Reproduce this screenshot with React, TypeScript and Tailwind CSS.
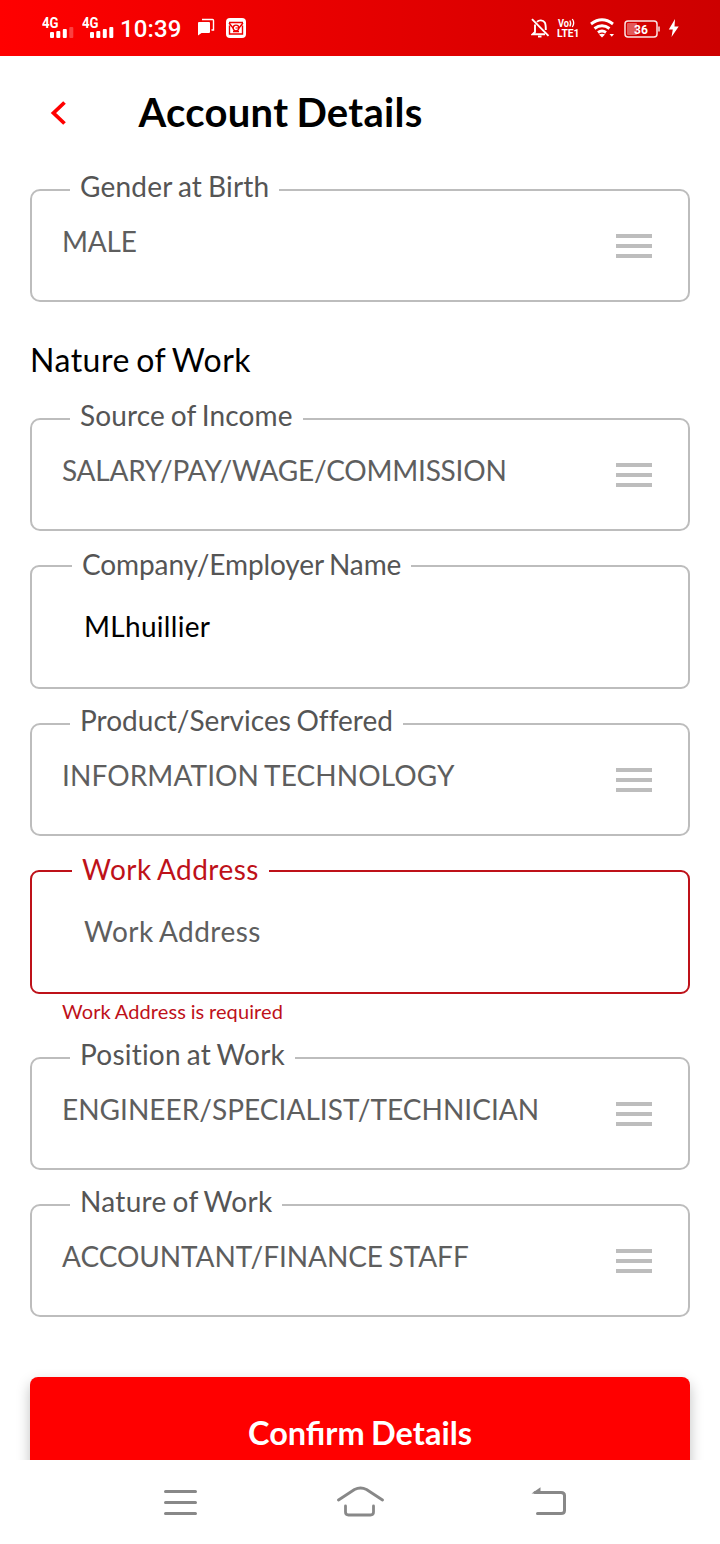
import React from "react";

function MenuBars() {
  return (
    <div className="flex w-9 flex-col gap-1.5">
      <div className="h-1 bg-[#bdbdbd]" />
      <div className="h-1 bg-[#bdbdbd]" />
      <div className="h-1 bg-[#bdbdbd]" />
    </div>
  );
}

type SelectProps = { label: string; value: string; labelClass: string; valueClass: string };

function SelectField({ label, value, labelClass, valueClass }: SelectProps) {
  return (
    <div className="relative flex h-[113px] shrink-0 items-start justify-between rounded-[10px] border-2 border-[#bdbdbd] pl-[30px] pr-9">
      <span className={`absolute left-[38px] top-[-23px] h-9 whitespace-nowrap bg-white px-2.5 text-[28px] leading-9 text-[#555] [word-spacing:-1.5px] ${labelClass}`}>{label}</span>
      <span className={`mt-8 whitespace-nowrap text-[28px] leading-9 text-[#5e5e5e] [word-spacing:-1.5px] ${valueClass}`}>{value}</span>
      <div className="mt-[43px]"><MenuBars /></div>
    </div>
  );
}

type InputProps = { label: string; value?: string; placeholder?: string; error?: string; labelClass: string; valueClass: string };

function InputField({ label, value, placeholder, error, labelClass, valueClass }: InputProps) {
  return (
    <div>
      <div className={`relative h-[124px] rounded-[9px] border-2 pl-[52px] ${error ? "border-[#be1119]" : "border-[#bdbdbd]"}`}>
        <span className={`absolute left-10 top-[-21px] h-9 whitespace-nowrap bg-white px-2.5 text-[28px] leading-9 [word-spacing:-1.5px] ${labelClass} ${error ? "text-[#be1119]" : "text-[#555]"}`}>{label}</span>
        <div className={`pt-[41px] text-[28px] leading-9 [word-spacing:-1.5px] ${valueClass} ${value ? "text-black" : "text-[#5e5e5e]"}`}>{value ?? placeholder}</div>
      </div>
      {error && <div className="pl-8 pt-[5px] text-[20px] leading-6 tracking-[0.11px] text-[#be1119] [word-spacing:-0.6px]">{error}</div>}
    </div>
  );
}

function Signal({ weak }: { weak?: boolean }) {
  return (
    <svg width="34" height="24" viewBox="0 0 34 24" fill="#fff">
      <text x="0" y="12" fontFamily="Roboto, sans-serif" fontWeight="700" fontSize="14" textLength="16.5" lengthAdjust="spacingAndGlyphs">4G</text>
      <rect x="8" y="16" width="4" height="6" rx="1" />
      <rect x="14.300" y="15" width="4" height="7" rx="1" />
      <rect x="20.800" y="13" width="4" height="9" rx="1" />
      <rect x="27.300" y="11" width="4" height="11" rx="1" opacity={weak ? 0.25 : 1} />
    </svg>
  );
}

function StatusBar() {
  return (
    <header className="flex h-14 shrink-0 items-start bg-linear-to-r from-[#ff0000] to-[#cd0000] pl-[42px] text-white">
      <div className="mt-4 flex">
        <div className="w-10"><Signal weak /></div>
        <div className="w-[38px]"><Signal /></div>
      </div>
      <div className="mt-[13px] w-[78px] whitespace-nowrap font-[Roboto] text-[24px] font-medium leading-8 tracking-[0.15px]">10:39</div>
      <svg className="mt-[18px]" width="18" height="20" viewBox="0 0 18 20">
        <path d="M0 5q0-1 1-1h10q1 0 1 1v9q0 1-1 1H3.500L0 17.500z" fill="#fff" />
        <path d="M4 1.500H14.500q1 0 1 1v9.500h-2" fill="none" stroke="#fff" strokeWidth="1.400" />
      </svg>
      <svg className="ml-2.5 mt-[18px]" width="20" height="20" viewBox="0 0 20 20" fill="none">
        <rect width="20" height="20" rx="4" fill="#fff" />
        <path d="M3 4.500H17M3.500 7.500v8.500h13V7.500M3 5l4.500 5.500M17 5l-4.500 5.500M7 13.500h6" stroke="#e00" strokeWidth="1.400" />
        <circle cx="10" cy="10" r="2.800" stroke="#e00" strokeWidth="1.300" />
        <path d="M9.500 10h2.500" stroke="#e00" />
      </svg>
      <svg className="ml-[285px] mt-[18px]" width="20" height="20" viewBox="0 0 20 20" fill="none" stroke="#fff" strokeWidth="1.900">
        <path d="M6 3.800C8 1.800 12 1.800 13.800 4.500c1 1.500 1 4 1 7.500M4 6.500V14l-2.500 2.300H14" />
        <path d="M1 1.200 17.500 17.800" />
        <path d="M7 18.500h3.500" />
      </svg>
      <svg className="ml-[6px] mt-[18px]" width="24" height="21" viewBox="0 0 24 21" fill="#fff" fontFamily="Roboto, sans-serif" fontWeight="700">
        <text x="1" y="9" fontSize="10" textLength="11" lengthAdjust="spacingAndGlyphs">Vo</text>
        <path d="M12.800 2.500q1.800 3 0 6M15.300 1q2.800 4 0 8" fill="none" stroke="#fff" strokeWidth="1.300" />
        <text x="0" y="19" fontSize="10.500" textLength="22.500" lengthAdjust="spacingAndGlyphs">LTE1</text>
      </svg>
      <svg className="ml-[9px] mt-[18px]" width="25" height="20" viewBox="0 0 25 20" fill="none" stroke="#fff" strokeWidth="2.900">
        <path d="M1 6Q12 -2.300 23 6M4.500 10.500Q12 4.900 19.500 10.500M8 14.500Q12 11.500 16 14.500" />
        <path d="M9 16.500q3-1.500 6 0l-3 3z" fill="#fff" stroke="none" />
        <path d="M19.500 16h4.500l-2.200 2.800z" fill="#fff" stroke="none" />
      </svg>
      <svg className="ml-[9px] mt-5" width="36" height="18" viewBox="0 0 36 18">
        <rect x="1" y="1" width="32" height="16" rx="3" fill="none" stroke="#fff" strokeWidth="1.500" opacity=".9" />
        <rect x="3" y="3" width="10" height="12" rx="1" fill="#fff" opacity=".35" />
        <path d="M35 6.500v5" stroke="#fff" strokeWidth="1.300" />
        <text x="17" y="14" textAnchor="middle" fontFamily="Roboto, sans-serif" fontSize="12" fontWeight="700" fill="#fff">36</text>
      </svg>
      <svg className="ml-2 mt-[19px]" width="12" height="19" viewBox="0 0 12 19"><path d="M7 0 .8 10.500h4L3.500 18 10.700 7.500H6.500z" fill="#fff" /></svg>
    </header>
  );
}

export default function App() {
  return (
    <div className="flex h-[1544px] w-[720px] flex-col overflow-hidden bg-white font-[Lato,sans-serif]">
      <StatusBar />
      <main className="flex h-[1404px] shrink-0 flex-col overflow-hidden px-[30px]">
        <div className="flex h-[133px] shrink-0 items-start">
          <svg className="ml-5 mt-[45px]" width="18" height="25" viewBox="0 0 18 25"><path d="M14.500 1.500 3.500 12 14.500 22.500" fill="none" stroke="#f00" strokeWidth="3.800" /></svg>
          <h1 className="ml-[70.500px] mt-8 whitespace-nowrap text-[40px] font-bold leading-[48px] tracking-[0.3px] [word-spacing:-2px]">Account Details</h1>
        </div>
        <SelectField label="Gender at Birth" value="MALE" labelClass="tracking-[0.21px]" valueClass="tracking-[-0.2px]" />
        <h2 className="my-[38px] text-[32px] leading-10 tracking-[0.49px] [word-spacing:-2.2px]">Nature of Work</h2>
        <div className="flex shrink-0 flex-col gap-[34px]">
          <SelectField label="Source of Income" value="SALARY/PAY/WAGE/COMMISSION" labelClass="tracking-[0.14px]" valueClass="tracking-[-0.22px]" />
          <InputField label="Company/Employer Name" value="MLhuillier" labelClass="tracking-[-0.11px]" valueClass="tracking-[0.3px]" />
          <SelectField label="Product/Services Offered" value="INFORMATION TECHNOLOGY" labelClass="tracking-[0.01px]" valueClass="tracking-[0.1px]" />
          <InputField label="Work Address" placeholder="Work Address" error="Work Address is required" labelClass="tracking-[0.49px]" valueClass="tracking-[0.49px]" />
          <SelectField label="Position at Work" value="ENGINEER/SPECIALIST/TECHNICIAN" labelClass="tracking-[0.22px]" valueClass="tracking-[0.03px]" />
          <SelectField label="Nature of Work" value="ACCOUNTANT/FINANCE STAFF" labelClass="tracking-[0.3px]" valueClass="tracking-[-0.06px]" />
        </div>
        <button className="mt-[60px] h-[112px] shrink-0 rounded-lg bg-[#ff0000] text-[32.5px] font-bold text-white shadow-[0_6px_14px_rgba(0,0,0,0.25)] [word-spacing:-1.5px]">Confirm Details</button>
      </main>
      <nav className="flex h-[84px] shrink-0 items-start bg-white pl-[164px] pt-6">
        <svg className="mt-1" width="34" height="30" viewBox="0 0 34 30" stroke="#888" strokeWidth="3" strokeLinecap="round"><path d="M1.500 3.500h30M1.500 14.500h30M1.500 25.500h30" /></svg>
        <svg className="ml-[138px]" width="48" height="34" viewBox="0 0 48 34" fill="none" stroke="#888" strokeWidth="2.800" strokeLinecap="round" strokeLinejoin="round">
          <path d="M2.500 16 18.500 5.500Q24.500 2.500 30.500 5.500L46.500 16" />
          <path d="M9.500 22v6q0 3 3 3h22q3 0 3-3v-6" />
        </svg>
        <svg className="ml-[146px]" width="37" height="34" viewBox="0 0 37 34" fill="none" stroke="#888" strokeWidth="3" strokeLinecap="round">
          <path d="M5 8.500H31q3.500 0 3.500 3V26.500q0 3-3.500 3H7.500" />
          <path d="M1.500 9.500 10.500 3.200V9.500z" fill="#888" stroke="none" />
        </svg>
      </nav>
    </div>
  );
}
